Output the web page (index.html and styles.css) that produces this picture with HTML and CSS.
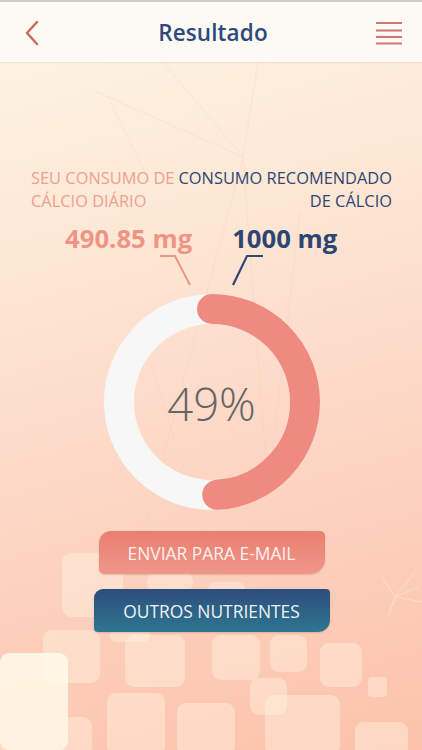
FILE: index.html
```html
<!DOCTYPE html>
<html lang="pt">
<head>
<meta charset="utf-8">
<title>Resultado</title>
<link rel="stylesheet" href="styles.css">
</head>
<body>
<div class="screen">
  <div class="bg" aria-hidden="true">
    <svg class="bg-lines" width="422" height="688" viewBox="0 0 422 688">
      <g stroke="#efd3b8" stroke-width="1" fill="none" opacity="0.35">
        <line x1="95" y1="29" x2="243" y2="95"/>
        <line x1="163" y1="0" x2="243" y2="95"/>
        <line x1="258" y1="0" x2="243" y2="95"/>
        <line x1="110" y1="40" x2="150" y2="120"/>
        <line x1="243" y1="95" x2="130" y2="520"/>
        <line x1="243" y1="95" x2="268" y2="430"/>
        <line x1="150" y1="300" x2="220" y2="520"/>
        <line x1="300" y1="150" x2="268" y2="430"/>
      </g>
      <g stroke="#fbe6cc" stroke-width="1.2" fill="none" opacity="0.7">
        <line x1="395" y1="535" x2="415" y2="510"/>
        <line x1="395" y1="535" x2="422" y2="540"/>
        <line x1="395" y1="535" x2="382" y2="515"/>
        <line x1="395" y1="535" x2="388" y2="555"/>
        <line x1="395" y1="535" x2="418" y2="525"/>
      </g>
    </svg>
    <span class="sq" style="left:62px;top:553px;width:61px;height:64px"></span>
    <span class="sq" style="left:147px;top:572px;width:46px;height:20px"></span>
    <span class="sq" style="left:208px;top:582px;width:37px;height:14px"></span>
    <span class="sq" style="left:110px;top:628px;width:40px;height:14px"></span>
    <span class="sq" style="left:43px;top:630px;width:57px;height:53px"></span>
    <span class="sq" style="left:125px;top:635px;width:60px;height:52px"></span>
    <span class="sq" style="left:212px;top:635px;width:48px;height:45px"></span>
    <span class="sq" style="left:270px;top:635px;width:37px;height:37px"></span>
    <span class="sq" style="left:320px;top:643px;width:42px;height:44px"></span>
    <span class="sq small" style="left:368px;top:677px;width:19px;height:20px"></span>
    <span class="sq bright" style="left:0;top:653px;width:68px;height:97px"></span>
    <span class="sq" style="left:0;top:717px;width:92px;height:40px"></span>
    <span class="sq" style="left:107px;top:693px;width:58px;height:62px"></span>
    <span class="sq" style="left:177px;top:703px;width:58px;height:52px"></span>
    <span class="sq" style="left:250px;top:678px;width:37px;height:37px"></span>
    <span class="sq" style="left:265px;top:695px;width:75px;height:60px"></span>
    <span class="sq" style="left:355px;top:722px;width:53px;height:35px"></span>
  </div>

  <header class="topbar">
    <button class="icon-btn back" aria-label="Voltar">
      <svg width="16" height="26" viewBox="0 0 16 26"><path d="M13 2 L3 13 L13 24" fill="none" stroke="#c8685a" stroke-width="2.4" stroke-linecap="round" stroke-linejoin="round"/></svg>
    </button>
    <h1 class="title">Resultado</h1>
    <button class="icon-btn menu" aria-label="Menu">
      <svg width="26" height="24" viewBox="0 0 26 24"><g stroke="#cf766d" stroke-width="2"><line x1="0" y1="2" x2="26" y2="2"/><line x1="0" y1="9.5" x2="26" y2="9.5"/><line x1="0" y1="16" x2="26" y2="16"/><line x1="0" y1="22.5" x2="26" y2="22.5"/></g></svg>
    </button>
  </header>

  <main class="content">
    <div class="labels">
      <div class="label mine">SEU CONSUMO DE<br>CÁLCIO DIÁRIO</div>
      <div class="label rec">CONSUMO RECOMENDADO<br>DE CÁLCIO</div>
    </div>
    <div class="values">
      <span class="value mine">490.85 mg</span>
      <span class="value rec">1000 mg</span>
    </div>
    <svg class="connectors" width="422" height="34" viewBox="0 0 422 34">
      <polyline points="160,2 175,2 190,31" fill="none" stroke="#ee9484" stroke-width="2"/>
      <polyline points="263,2 247,2 233,31" fill="none" stroke="#2d4672" stroke-width="2.2"/>
    </svg>
    <div class="chart">
      <svg width="216" height="216" viewBox="0 0 216 216">
        <circle cx="108" cy="108" r="93" fill="none" stroke="#f8f7f7" stroke-width="30"/>
        <circle cx="108" cy="108" r="93" fill="none" stroke="#ee8a80" stroke-width="30" stroke-linecap="round"
          stroke-dasharray="286.3 584.3" transform="rotate(-90 108 108)"/>
      </svg>
      <div class="pct">49%</div>
    </div>
    <div class="actions">
      <button class="btn email">ENVIAR PARA E-MAIL</button>
      <button class="btn others">OUTROS NUTRIENTES</button>
    </div>
  </main>
</div>
</body>
</html>
```
FILE: styles.css
```css
* { box-sizing: border-box; }
html, body { margin: 0; padding: 0; }
body {
  width: 422px;
  height: 750px;
  overflow: hidden;
  font-family: "Open Sans", "Noto Sans", sans-serif;
  background: #fcd6c6;
}
.screen {
  position: relative;
  width: 422px;
  height: 750px;
  overflow: hidden;
  background: linear-gradient(165deg, #fdf5e4 0%, #fde9d7 28%, #fddccb 50%, #fcd0bd 72%, #fcc2aa 100%);
}
.bg {
  position: absolute;
  left: 0; top: 62px;
  width: 422px; height: 688px;
  z-index: 0;
}
.bg-lines { position: absolute; left: 0; top: 0; }
.sq {
  position: absolute;
  border-radius: 9px;
  background: rgba(255, 242, 224, 0.45);
  transform: translateY(-62px);
}
.sq.bright { background: rgba(255, 250, 232, 0.85); }
.sq.small { border-radius: 4px; }

.topbar {
  position: relative;
  z-index: 1;
  height: 62px;
  border-top: 2px solid #cfcbc8;
  background: #fdf9f5;
  display: flex;
  align-items: center;
  justify-content: space-between;
  padding: 0 20px 0 24px;
  box-shadow: 0 1px 1px rgba(220, 200, 185, 0.35);
}
.icon-btn {
  border: 0;
  background: none;
  padding: 0;
  display: flex;
  align-items: center;
}
.back { width: 30px; margin-top: 1px; }
.menu { width: 30px; justify-content: flex-end; margin-top: 1px; }
.title {
  margin: 0;
  font-size: 22.5px;
  font-weight: 600;
  color: #2c4a7c;
  letter-spacing: 0.1px;
}

.content {
  position: relative;
  z-index: 1;
  display: flex;
  flex-direction: column;
  align-items: center;
  padding-top: 104px;
}
.labels {
  width: 422px;
  display: flex;
  justify-content: space-between;
  padding: 0 30px 0 31px;
  font-size: 16.4px;
  line-height: 23px;
}
.label.mine { color: #f0a090; }
.label.rec { color: #2f4673; text-align: right; }

.values {
  width: 422px;
  display: flex;
  gap: 40px;
  padding-left: 65px;
  margin-top: 11px;
  font-size: 25.7px;
  font-weight: 700;
  line-height: 31px;
}
.value.mine { color: #ef9484; }
.value.rec { color: #2c4672; }

.connectors { display: block; margin-top: 0; }

.chart {
  position: relative;
  width: 216px;
  height: 216px;
  margin-top: 6px;
  margin-left: 1px;
}
.chart svg { display: block; }
.pct {
  position: absolute;
  inset: 0;
  display: flex;
  align-items: center;
  justify-content: center;
  font-size: 45.5px;
  font-weight: 300;
  color: #656565;
  padding-top: 2px;
}

.actions {
  display: flex;
  flex-direction: column;
  align-items: center;
  gap: 15px;
  margin-top: 21px;
}
.btn {
  border: 0;
  font-family: "Open Sans", "Noto Sans", sans-serif;
  font-size: 17.4px;
  color: #fdf1ec;
  height: 43px;
  padding: 0;
  box-shadow: 0 1px 2px rgba(150, 90, 70, 0.25);
}
.btn.email {
  width: 226px;
  margin-left: 1px;
  background: linear-gradient(180deg, #e97f70 0%, #f0958a 100%);
  border-radius: 12px 5px 15px 5px;
}
.btn.others {
  width: 236px;
  margin-left: 1px;
  background: linear-gradient(180deg, #2d4d7c 0%, #2e7690 100%);
  border-radius: 9px 4px 12px 4px;
  color: #eef4f6;
}
```
